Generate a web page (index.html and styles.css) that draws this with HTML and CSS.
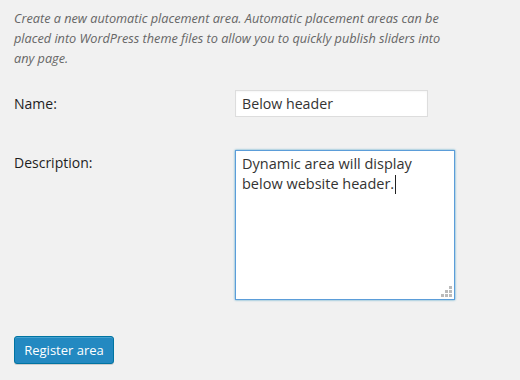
FILE: index.html
```html
<!DOCTYPE html>
<html lang="en">
<head>
    <meta charset="UTF-8">
    <title>Add placement area</title>
    <link rel="stylesheet" href="styles.css">
</head>
<body>
    <div class="area-form">
        <p class="intro">Create a new automatic placement area. Automatic placement areas can be placed into WordPress theme files to allow you to quickly publish sliders into any page.</p>

        <div class="fields">
            <label class="field-label name-label" for="area-name">Name:</label>
            <div class="field-input">
                <input id="area-name" class="text-input" type="text" value="Below header">
            </div>

            <label class="field-label desc-label" for="area-desc">Description:</label>
            <div class="field-input">
                <div class="textarea-box">
                    <div class="textarea-text">Dynamic area will display below website header.<span class="caret"></span></div>
                    <div class="grip">
                        <span class="dot d1"></span>
                        <span class="dot d2"></span><span class="dot d3"></span>
                        <span class="dot d4"></span><span class="dot d5"></span><span class="dot d6"></span>
                    </div>
                </div>
            </div>
        </div>

        <button class="button-primary">Register area</button>
    </div>
</body>
</html>
```
FILE: styles.css
```css
body {
    margin: 0;
    background: #f1f1f1;
    font-family: "Open Sans", "Liberation Sans", sans-serif;
    color: #222;
}

.area-form {
    padding: 8px 14px;
}

.intro {
    margin: 0;
    width: 440px;
    font-size: 12.7px;
    line-height: 20px;
    font-style: italic;
    color: #666;
}

.fields {
    display: grid;
    grid-template-columns: 221px 1fr;
    row-gap: 33px;
    margin-top: 22px;
}

.field-label {
    font-size: 14px;
    line-height: 20px;
    color: #1e1e1e;
}

.name-label {
    padding-top: 4px;
}

.desc-label {
    padding-top: 3px;
}

.text-input {
    display: block;
    box-sizing: border-box;
    width: 193px;
    height: 27px;
    margin: 0;
    padding: 0 6px;
    border: 1px solid #ddd;
    background: #fff;
    font-family: inherit;
    font-size: 14.2px;
    color: #333;
    box-shadow: inset 0 1px 2px rgba(0, 0, 0, 0.04);
    outline: none;
}

.textarea-box {
    position: relative;
    box-sizing: border-box;
    width: 220px;
    height: 150px;
    border: 1px solid #5b9dd9;
    background: #fff;
    box-shadow: 0 0 2px rgba(30, 140, 190, 0.8);
}

.textarea-text {
    padding: 3px 6px;
    font-size: 14.5px;
    line-height: 20px;
    color: #333;
}

.caret {
    display: inline-block;
    width: 1px;
    height: 19px;
    margin-left: 1px;
    background: #222;
    vertical-align: -5px;
}

.grip {
    position: absolute;
    right: 2px;
    bottom: 2px;
    width: 11px;
    height: 11px;
}

.dot {
    position: absolute;
    width: 3px;
    height: 3px;
    background: #bbb;
}

.d1 { right: 0; top: 0; }
.d2 { right: 4px; top: 4px; }
.d3 { right: 0; top: 4px; }
.d4 { right: 8px; top: 8px; }
.d5 { right: 4px; top: 8px; }
.d6 { right: 0; top: 8px; }

.button-primary {
    display: block;
    box-sizing: border-box;
    width: 100px;
    height: 28px;
    margin-top: 36px;
    padding: 0 0 1px;
    border: 1px solid #0074a2;
    border-radius: 3px;
    background: #2389c1;
    box-shadow: inset 0 1px 0 rgba(120, 200, 230, 0.4), 0 1px 0 rgba(0, 0, 0, 0.15);
    font-family: inherit;
    font-size: 13px;
    white-space: nowrap;
    color: #fff;
}
```
